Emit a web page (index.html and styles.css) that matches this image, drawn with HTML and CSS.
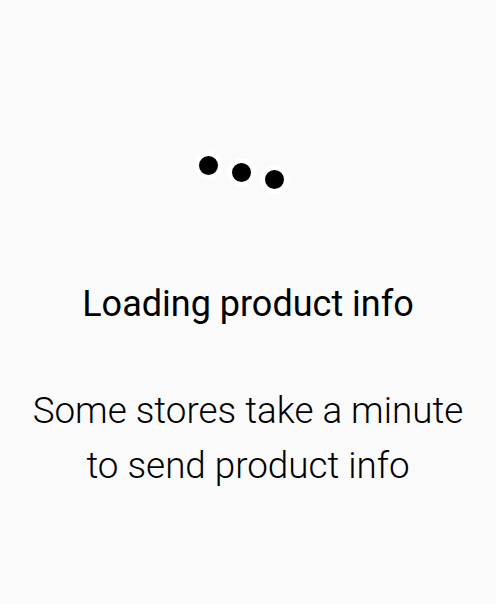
FILE: index.html
```html
<!DOCTYPE html>
<html>
<head>
<meta charset="utf-8">
<link rel="stylesheet" href="styles.css">
</head>
<body>
<main class="screen">
  <div class="dots">
    <span class="dot d1"></span>
    <span class="dot d2"></span>
    <span class="dot d3"></span>
  </div>
  <h1 class="title">Loading product info</h1>
  <p class="body">Some stores take a minute<br>to send product info</p>
</main>
</body>
</html>
```
FILE: styles.css
```css
html, body {
  margin: 0;
  padding: 0;
  background: #fafafa;
}
.screen {
  width: 496px;
  height: 604px;
  display: flex;
  flex-direction: column;
  align-items: center;
  font-family: Roboto, "Noto Sans", sans-serif;
  color: #000;
}
.dots {
  margin-top: 151px;
  margin-right: 13px;
  height: 45px;
  display: flex;
  gap: 4px;
}
.dot {
  width: 19px;
  height: 19px;
  border-radius: 50%;
  background: #000;
  border: 5.5px solid #fff;
}
.d1 { margin-top: 0; }
.d2 { margin-top: 7px; }
.d3 { margin-top: 14px; }
.title {
  margin: 88px 0 0;
  font-size: 36px;
  font-weight: 400;
  line-height: 40px;
}
.body {
  margin: 59px 0 0;
  font-size: 36.8px;
  font-weight: 300;
  line-height: 55px;
  text-align: center;
}
```
